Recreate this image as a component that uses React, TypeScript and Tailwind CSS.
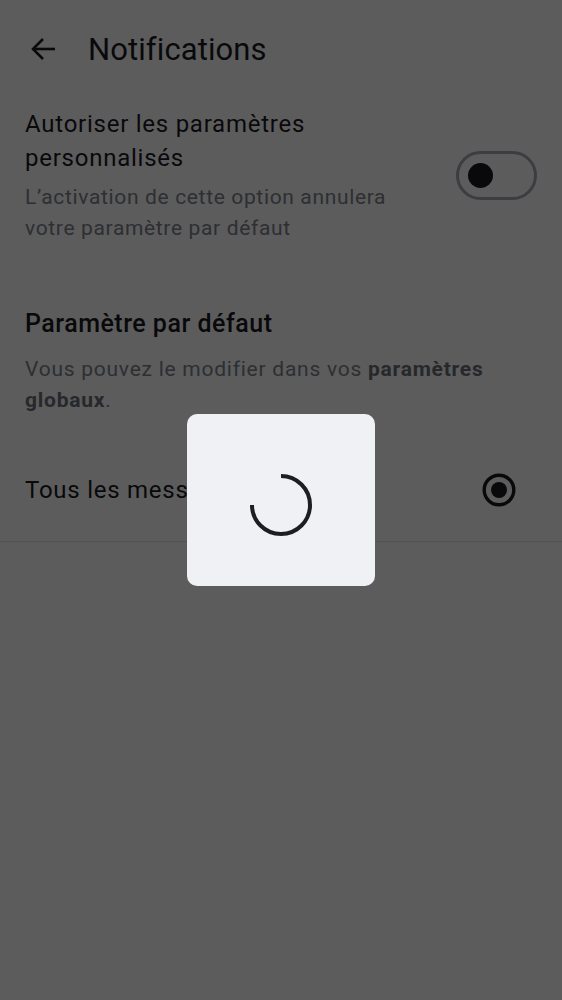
import React from 'react'

function BackArrow() {
  return (
    <svg width="30" height="30" viewBox="0 0 30 30" fill="none" stroke="#1b1b1f" strokeWidth="2.6" strokeLinecap="butt" strokeLinejoin="miter">
      <path d="M27 15H5.5" />
      <path d="M15 5L5 15L15 25" />
    </svg>
  )
}

function Spinner() {
  return (
    <svg width="64" height="64" viewBox="0 0 64 64" fill="none">
      <path d="M32 3A29 29 0 1 1 3 32" stroke="#1d1e22" strokeWidth="4" />
    </svg>
  )
}

function RadioOn() {
  return (
    <svg width="34" height="34" viewBox="0 0 34 34" fill="none">
      <circle cx="17" cy="17" r="14.8" stroke="#1b1b1f" strokeWidth="3.4" />
      <circle cx="17" cy="17" r="8" fill="#1b1b1f" />
    </svg>
  )
}

export default function App() {
  return (
    <div className="relative min-h-screen bg-white text-[#1b1b1f] font-['Roboto',sans-serif]">
      {/* En-tête */}
      <header className="flex h-[98px] items-center pl-[28px]">
        <BackArrow />
        <h1 className="ml-[30px] text-[31px] font-normal leading-none tracking-[0.1px]">Notifications</h1>
      </header>

      {/* Paramètres personnalisés */}
      <div className="flex items-center gap-[31px] px-[25px] pt-[9px]">
        <div className="flex-1">
          <p className="text-[24px] leading-[34px] tracking-[0.75px]">Autoriser les paramètres personnalisés</p>
          <p className="mt-[7px] text-[21px] leading-[31px] tracking-[0.65px] text-[#7e828c]">
            L’activation de cette option annulera votre paramètre par défaut
          </p>
        </div>
        <div className="flex h-[49px] w-[81px] shrink-0 items-center rounded-full border-[3px] border-[#a4a9b4] pl-[9px]">
          <div className="h-[25px] w-[25px] rounded-full bg-[#1b1b1f]" />
        </div>
      </div>

      {/* Paramètre par défaut */}
      <div className="mt-[65px] px-[25px]">
        <h2 className="text-[25px] font-medium leading-[30px] tracking-[0.5px]">Paramètre par défaut</h2>
        <p className="mt-[15px] text-[21px] leading-[31px] tracking-[0.75px] text-[#7e828c]">
          Vous pouvez le modifier dans vos <b className="font-bold text-[#6c7079]">paramètres globaux</b>.
        </p>
      </div>

      <div className="mt-[23px] flex h-[103px] items-center justify-between border-b border-[#e4e4e4] pl-[25px] pr-[46px]">
        <span className="text-[24px] leading-[34px] tracking-[0.75px]">Tous les messages</span>
        <RadioOn />
      </div>

      {/* Voile + chargement */}
      <div className="fixed inset-0 flex items-center justify-center bg-black/[0.64]">
        <div className="flex h-[172px] w-[188px] items-center justify-center rounded-[10px] bg-[#f0f1f5] pt-[9px]">
          <Spinner />
        </div>
      </div>
    </div>
  )
}
